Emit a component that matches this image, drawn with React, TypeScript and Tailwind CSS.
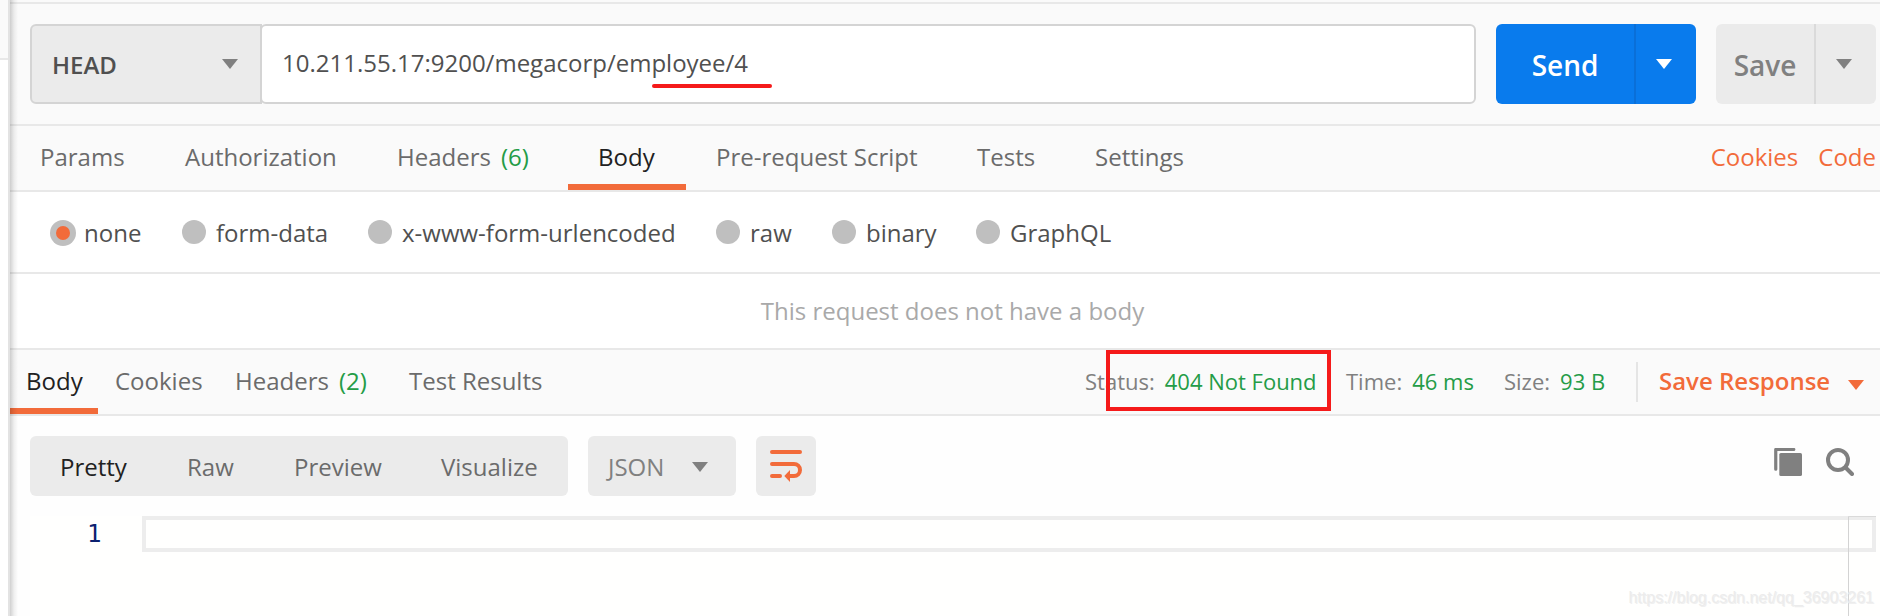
import React from "react";

function Caret({ className }: { className?: string }) {
  return (
    <svg width="16" height="10" viewBox="0 0 16 10" className={"shrink-0 " + (className ?? "")}>
      <path d="M0 0H16L8 10Z" fill="currentColor" />
    </svg>
  );
}

const requestTabs = [
  { label: "Params", box: "w-[145px]" },
  { label: "Authorization", box: "w-[212px]" },
  { label: "Headers", count: "(6)", box: "w-[201px]" },
  { label: "Body", box: "w-[118px]", active: true },
  { label: "Pre-request Script", box: "w-[261px]" },
  { label: "Tests", box: "w-[118px]" },
  { label: "Settings", box: "w-[150px]" },
];

const bodyTypes = [
  { label: "none", box: "w-[132px]", checked: true },
  { label: "form-data", box: "w-[186px]" },
  { label: "x-www-form-urlencoded", box: "w-[348px]" },
  { label: "raw", box: "w-[116px]" },
  { label: "binary", box: "w-[144px]" },
  { label: "GraphQL", box: "w-[160px]" },
];

const responseTabs = [
  { label: "Body", box: "w-[88px] pl-4", active: true },
  { label: "Cookies", box: "w-[120px] pl-[17px]" },
  { label: "Headers", count: "(2)", box: "w-[174px] pl-[17px]" },
  { label: "Test Results", box: "w-[180px] pl-[17px]" },
];

const views = [
  { label: "Pretty", box: "w-[127px] text-[#212121]" },
  { label: "Raw", box: "w-[107px]" },
  { label: "Preview", box: "w-[147px]" },
  { label: "Visualize", box: "w-[110px]" },
];

function RequestBar() {
  return (
    <div className="flex h-[122px] border-b-2 border-[#e8e8e8] pt-5 pl-5">
      <div className="flex h-20 w-[232px] items-center justify-between rounded-l-md border-2 border-[#d4d4d4] bg-[#ebebeb] pr-[22px] pb-[1px] pl-[20px]">
        <span className="pt-[3px] font-semibold text-[#505050]">HEAD</span>
        <Caret className="text-[#808080]" />
      </div>
      <div className="-ml-[2px] flex h-20 w-[1216px] items-center rounded-md border-2 border-[#d4d4d4] bg-white pb-[2px] pl-[20px] text-[#505050]">
        <span className="relative">
          10.211.55.17:9200/megacorp/employee/4
          <span className="absolute top-[37px] left-[370px] h-1 w-[120px] rounded-full bg-[#f51a1a]" />
        </span>
      </div>
      <div className="ml-5 flex h-20 w-[200px] overflow-hidden rounded-md bg-[#097bed] text-[28px] font-semibold text-white">
        <span className="flex w-[138px] items-center justify-center pt-[1px]">Send</span>
        <span className="flex flex-1 items-center border-l-2 border-[#0a6fd8] pb-[1px] pl-5">
          <Caret />
        </span>
      </div>
      <div className="ml-5 flex h-20 w-40 overflow-hidden rounded-md bg-[#ebebeb] text-[28px] font-semibold text-[#808080]">
        <span className="flex w-[98px] items-center justify-center pt-[1px]">Save</span>
        <span className="flex flex-1 items-center border-l-2 border-[#dadada] pb-[1px] pl-5">
          <Caret />
        </span>
      </div>
    </div>
  );
}

function RequestTabs() {
  return (
    <div className="flex h-[66px] border-b-2 border-[#e8e8e8] text-[#6b6b6b]">
      {requestTabs.map((t) => (
        <div
          key={t.label}
          className={
            "flex items-center border-b-[6px] pt-[4px] pl-[30px] " +
            t.box +
            (t.active ? " border-[#f26b3a] text-[#212121]" : " border-transparent")
          }
        >
          {t.label}
          {t.count && <span className="ml-[10px] text-[#249c47]">{t.count}</span>}
        </div>
      ))}
      <div className="ml-auto flex items-center gap-5 pr-1 pb-[2px] text-[#f26b3a]">
        <span>Cookies</span>
        <span>Code</span>
      </div>
    </div>
  );
}

function BodyTypes() {
  return (
    <div className="flex h-[82px] border-b-2 border-[#e8e8e8] bg-white pt-7 pl-10 text-[#505050]">
      {bodyTypes.map((b) => (
        <div key={b.label} className={"flex items-start " + b.box}>
          {b.checked ? (
            <span className="flex size-[26px] shrink-0 items-center justify-center rounded-full bg-[#bfbfbf]">
              <span className="size-[14px] rounded-full bg-[#f26b3a]" />
            </span>
          ) : (
            <span className="size-6 shrink-0 rounded-full bg-[#bfbfbf]" />
          )}
          <span className={"-mt-[3px] " + (b.checked ? "ml-[8px]" : "ml-[10px]")}>{b.label}</span>
        </div>
      ))}
    </div>
  );
}

function ResponseHeader() {
  return (
    <div className="relative flex h-[66px] border-b-2 border-[#e8e8e8] text-[#6b6b6b]">
      {responseTabs.map((t) => (
        <div
          key={t.label}
          className={
            "flex items-center border-b-[6px] pt-[4px] " +
            t.box +
            (t.active ? " border-[#f26b3a] text-[#212121]" : " border-transparent")
          }
        >
          {t.label}
          {t.count && <span className="ml-[10px] text-[#249c47]">{t.count}</span>}
        </div>
      ))}
      <div className="ml-auto flex items-center text-[22px] text-[#808080]">
        <div className="-mt-[2px] flex w-[261px] gap-[10px]">
          <span>Status:</span>
          <span className="text-[#249c47]">404 Not Found</span>
        </div>
        <div className="-mt-[2px] flex w-[158px] gap-[10px]">
          <span>Time:</span>
          <span className="text-[#249c47]">46 ms</span>
        </div>
        <div className="-mt-[2px] flex w-[132px] gap-[10px]">
          <span>Size:</span>
          <span className="text-[#249c47]">93 B</span>
        </div>
        <div className="h-10 w-[2px] bg-[#e5e5e5]" />
        <span className="-mt-[2px] w-[210px] pl-[21px] text-2xl font-semibold text-[#f26b3a]">Save Response</span>
        <Caret className="mt-[6px] mr-4 text-[#f26b3a]" />
      </div>
      <div className="absolute top-0 left-[1096px] h-[61px] w-[225px] border-4 border-[#f51a1a]" />
    </div>
  );
}

function Toolbar() {
  return (
    <div className="flex h-[100px] pt-5 pl-5 text-[#6b6b6b]">
      <div className="flex h-[60px] w-[538px] items-center rounded-md bg-[#ebebeb] pt-[1px] pl-[30px]">
        {views.map((v) => (
          <span key={v.label} className={v.box}>
            {v.label}
          </span>
        ))}
      </div>
      <div className="ml-5 flex h-[60px] w-[148px] items-center justify-between rounded-md bg-[#ebebeb] pr-7 pl-5 text-[#808080]">
        <span className="pt-[1px]">JSON</span>
        <Caret className="mt-[2px]" />
      </div>
      <div className="ml-5 size-[60px] rounded-md bg-[#ebebeb] text-[#f26b3a]">
        <svg width="60" height="60" viewBox="0 0 60 60" fill="none">
          <path
            d="M16 16H44M16 28H38A6 6 0 0 1 38 40H33M16 40H24"
            stroke="currentColor"
            strokeWidth="4"
            strokeLinecap="round"
          />
          <path d="M28.3 40L34 34V46Z" fill="currentColor" />
        </svg>
      </div>
      <svg className="mt-3 ml-auto" width="28" height="28" viewBox="0 0 28 28" fill="none">
        <path d="M1.75 21.2V1.5H19.8" stroke="#808080" strokeWidth="3.2" strokeLinecap="round" strokeLinejoin="round" />
        <rect x="5.3" y="5" width="22.7" height="23" rx="1.6" fill="#808080" />
      </svg>
      <svg className="mt-3 mr-[26px] ml-6" width="28" height="28" viewBox="0 0 28 28" fill="none" stroke="#808080" strokeWidth="4">
        <circle cx="12" cy="12" r="10" />
        <path d="M19.5 19.5L26 26" strokeLinecap="round" />
      </svg>
    </div>
  );
}

function Editor() {
  return (
    <div className="relative ml-5 flex h-[100px] bg-[#fffffe]">
      <span className="w-[112px] pl-[57px] font-['DejaVu_Sans_Mono',monospace] leading-[37px] text-[#0b216f]">1</span>
      <div className="h-9 w-[1734px] border-4 border-[#ededed]" />
      <div className="absolute top-0 left-[1818px] h-[100px] w-[28px] border-l border-[#d3d3d3]" />
      <div className="absolute top-0 left-[1818px] h-px w-7 bg-[#dadada]" />
      <span className="absolute right-[6px] bottom-[6px] font-['Liberation_Sans',Arial,sans-serif] text-base leading-6 text-[#ececec] [text-shadow:1px_1px_0_#f0f0f0]">
        https://blog.csdn.net/qq_36903261
      </span>
    </div>
  );
}

export default function App() {
  return (
    <div className="flex h-[616px] w-[1880px] overflow-hidden bg-white font-['Open_Sans',sans-serif] text-2xl leading-8 whitespace-nowrap">
      <div className="w-2 shrink-0">
        <div className="h-[60px] border-b-2 border-[#e8e8e8] bg-[#fafafa]" />
      </div>
      <div className="w-[2px] shrink-0 bg-[#e3e3e3]" />
      <main className="relative w-[1870px] bg-[#fafafa]">
        <div className="h-1 border-b-2 border-[#e8e8e8]" />
        <RequestBar />
        <RequestTabs />
        <BodyTypes />
        <div className="flex h-[76px] items-center justify-center border-b-2 border-[#e8e8e8] bg-white pb-[1px] pl-[15px] text-[#a9a9a9]">
          This request does not have a body
        </div>
        <ResponseHeader />
        <div className="bg-[#fefefe]">
          <Toolbar />
          <Editor />
        </div>
        <div className="absolute inset-y-0 left-0 w-2 bg-linear-to-r from-black/18 via-black/6 to-transparent" />
      </main>
    </div>
  );
}
